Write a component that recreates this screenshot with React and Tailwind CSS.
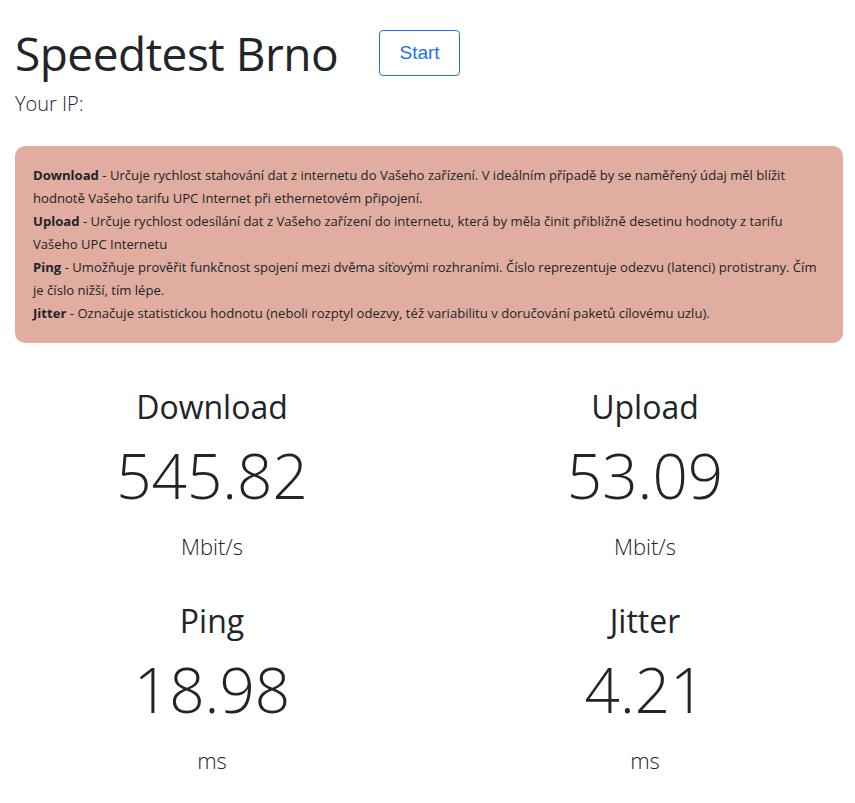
export default function App() {
  const stats = [
    { label: "Download", value: "545.82", unit: "Mbit/s" },
    { label: "Upload", value: "53.09", unit: "Mbit/s" },
    { label: "Ping", value: "18.98", unit: "ms" },
    { label: "Jitter", value: "4.21", unit: "ms" },
  ];

  return (
    <div className="min-h-screen bg-white pl-[15px] pr-[12px] font-['Open_Sans',sans-serif] text-[#212529]">
      <div className="flex items-center gap-[41px] pt-[22px]">
        <h1 className="text-[46px] leading-[62px] font-normal tracking-[-0.5px]">Speedtest Brno</h1>
        <button className="h-[46px] w-[81px] rounded-[4px] border border-[#1a73e8] font-['Liberation_Sans',sans-serif] text-[19px] text-[#1a73e8]">
          Start
        </button>
      </div>
      <p className="mt-[5px] text-[20px] leading-[30px] font-light">Your IP:</p>

      <div className="mt-[27px] rounded-[10px] bg-[#e0ada0] px-[18px] py-[18px] text-[13.1px] leading-[23px]">
        <div>
          <b>Download</b> - Určuje rychlost stahování dat z internetu do Vašeho zařízení. V ideálním případě by se naměřený údaj měl blížit
          <br />
          hodnotě Vašeho tarifu UPC Internet při ethernetovém připojení.
        </div>
        <div>
          <b>Upload</b> - Určuje rychlost odesílání dat z Vašeho zařízení do internetu, která by měla činit přibližně desetinu hodnoty z tarifu
          <br />
          Vašeho UPC Internetu
        </div>
        <div>
          <b>Ping</b> - Umožňuje prověřit funkčnost spojení mezi dvěma síťovými rozhraními. Číslo reprezentuje odezvu (latenci) protistrany. Čím
          <br />
          je číslo nižší, tím lépe.
        </div>
        <div>
          <b>Jitter</b> - Označuje statistickou hodnotu (neboli rozptyl odezvy, též variabilitu v doručování paketů cílovému uzlu).
        </div>
      </div>

      <div className="-ml-[15px] -mr-[12px] mt-[44px] grid grid-cols-[424px_1fr] gap-y-[40px]">
        {stats.map((s, i) => (
          <div key={s.label} className={`flex flex-col items-center ${i % 2 ? "pl-[11px]" : ""}`}>
            <div className="text-[32px] leading-[40px]">{s.label}</div>
            <div className="mt-[8px] text-[62px] leading-[80px] font-light">{s.value}</div>
            <div className="mt-[16px] text-[22px] leading-[30px] font-light">{s.unit}</div>
          </div>
        ))}
      </div>
    </div>
  );
}
